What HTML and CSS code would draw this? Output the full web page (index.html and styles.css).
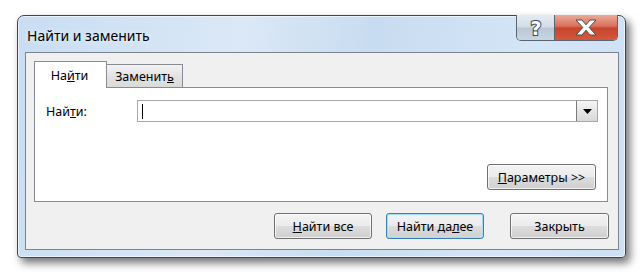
FILE: index.html
```html
<!DOCTYPE html>
<html lang="ru">
<head>
    <meta charset="UTF-8">
    <title>Найти и заменить</title>
    <link rel="stylesheet" href="styles.css">
</head>
<body>
    <div class="window">
        <div class="titlebar">
            <span class="title">Найти и заменить</span>
            <div class="caption-buttons">
                <div class="cap-btn help">
                    <svg width="20" height="24" viewBox="0 0 20 24">
                        <text x="10" y="19" text-anchor="middle" class="help-glyph">?</text>
                    </svg>
                </div>
                <div class="cap-btn close">
                    <svg width="22" height="17" viewBox="0 0 22 17">
                        <polygon points="1,1 7,1 11,5.8 15,1 21,1 14.2,8.5 21,16 15,16 11,11.2 7,16 1,16 7.8,8.5" class="close-glyph"/>
                    </svg>
                </div>
            </div>
        </div>

        <div class="client">
            <div class="tabs">
                <div class="tab active">На<u>й</u>ти</div>
                <div class="tab">Заменит<u>ь</u></div>
            </div>
            <div class="panel">
                <div class="find-row">
                    <label class="find-label">Най<u>т</u>и:</label>
                    <div class="combo">
                        <span class="caret"></span>
                        <div class="combo-arrow">
                            <svg width="9" height="5" viewBox="0 0 9 5"><polygon points="0,0 9,0 4.5,5" fill="#000"/></svg>
                        </div>
                    </div>
                </div>
                <button class="button params"><u>П</u>араметры &gt;&gt;</button>
            </div>
            <div class="actions">
                <button class="button"><u>Н</u>айти все</button>
                <button class="button default">Найти да<u>л</u>ее</button>
                <button class="button close-btn">Закрыть</button>
            </div>
        </div>
    </div>
</body>
</html>
```

FILE: styles.css
```css
* {
    margin: 0;
    padding: 0;
    box-sizing: border-box;
}
body {
    font-family: "Noto Sans", "Liberation Sans", sans-serif;
    font-size: 12.5px;
    color: #000;
    background-color: #fff;
    width: 642px;
    height: 272px;
    overflow: hidden;
}
.window {
    margin: 15px 0 0 17px;
    width: 609px;
    height: 243px;
    border: 1px solid #3d4650;
    border-radius: 7px 7px 4px 4px;
    background: linear-gradient(100deg, #c8ddf3 0%, #dbe8f6 35%, #c8dcf1 55%, #d4e5f6 80%, #cde0f4 100%);
    box-shadow: 4px 5px 9px rgba(0, 0, 0, 0.55), inset 0 0 0 1px rgba(255, 255, 255, 0.6);
    padding: 0 6px 7px 7px;
    display: flex;
    flex-direction: column;
}
.titlebar {
    height: 36px;
    display: flex;
    justify-content: space-between;
    align-items: flex-start;
}
.title {
    font-size: 14px;
    padding: 10px 0 0 2px;
    text-shadow: 0 0 6px rgba(255, 255, 255, 0.9);
}
.caption-buttons {
    display: flex;
    height: 26px;
    margin-top: -1px;
    margin-right: 1px;
    border: 1px solid #5b6572;
    border-top: none;
    border-radius: 0 0 5px 5px;
    overflow: hidden;
}
.cap-btn {
    display: flex;
    align-items: center;
    justify-content: center;
}
.help {
    width: 38px;
    background: linear-gradient(#e4ebf3 0%, #d3dde8 48%, #bac7d5 52%, #c9d5e1 100%);
    border-right: 1px solid #5b6572;
}
.help-glyph {
    font-family: "DejaVu Sans", sans-serif;
    font-weight: bold;
    font-size: 19px;
    fill: #fafbfc;
    stroke: #404a55;
    stroke-width: 2;
    paint-order: stroke;
}
.close {
    width: 62px;
    background: linear-gradient(#e9a998 0%, #d9705a 45%, #c7442c 52%, #d4583e 100%);
}
.close-glyph {
    fill: #fff;
    stroke: #4d4d4d;
    stroke-width: 1;
    stroke-linejoin: round;
}
.client {
    flex: 1;
    background-color: #f0f0f0;
    border: 1px solid #7b838d;
    padding: 8px 9px 10px 8px;
    display: flex;
    flex-direction: column;
}
.tabs {
    display: flex;
    align-items: flex-end;
    height: 26px;
}
.tab {
    width: 76px;
    height: 23px;
    border: 1px solid #898c95;
    border-bottom: none;
    border-left: none;
    background: linear-gradient(#f3f3f3, #e3e3e3 50%, #dadada);
    display: flex;
    align-items: center;
    justify-content: center;
    padding-top: 1px;
}
.tab.active {
    width: 73px;
    height: 27px;
    border-left: 1px solid #898c95;
    background: #fff;
    margin-bottom: -1px;
    position: relative;
    z-index: 1;
    padding-top: 0;
    padding-right: 2px;
}
.panel {
    margin-right: 1px;
    height: 115px;
    background-color: #fff;
    border: 1px solid #898c95;
    padding: 12px 9px 11px 11px;
    display: flex;
    flex-direction: column;
}
.find-row {
    display: flex;
    align-items: center;
}
.find-label {
    width: 91px;
}
.combo {
    flex: 1;
    height: 22px;
    border: 1px solid #a5a7ab;
    background: #fff;
    display: flex;
    align-items: center;
    justify-content: space-between;
    padding-left: 4px;
}
.caret {
    width: 1px;
    height: 15px;
    background: #000;
}
.combo-arrow {
    width: 21px;
    height: 20px;
    border-left: 1px solid #7a7a7a;
    background: linear-gradient(#f6f6f6, #e6e6e6 50%, #d9d9d9);
    display: flex;
    align-items: center;
    justify-content: center;
}
.button {
    font-family: inherit;
    font-size: 12.5px;
    color: #000;
    height: 26px;
    width: 98px;
    border: 1px solid #707070;
    border-radius: 3px;
    background: linear-gradient(#f3f3f3 0%, #ebebeb 48%, #dddddd 52%, #cfcfcf 100%);
    box-shadow: inset 0 0 0 1px rgba(255, 255, 255, 0.7);
}
.params {
    align-self: flex-end;
    margin-top: auto;
    margin-right: 2px;
    width: 109px;
}
.actions {
    margin-top: auto;
    display: flex;
    justify-content: flex-end;
    gap: 14px;
}
.button.default {
    border-color: #3c7fb1;
    box-shadow: inset 0 0 0 1px #a6dcf5, inset 0 0 2px 1px #c8ecfb;
}
.button.close-btn {
    width: 99px;
    margin-left: 12px;
}
```
